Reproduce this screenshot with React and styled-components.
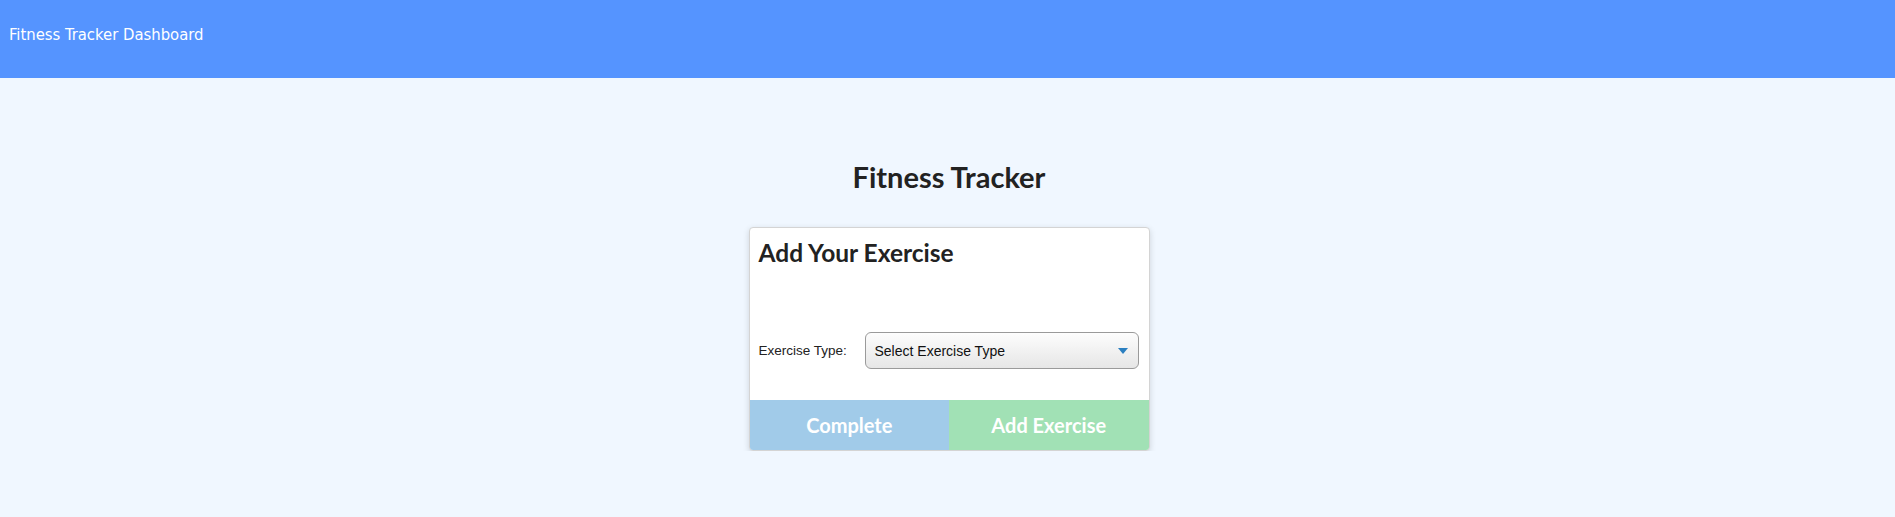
import React from "react";
import styled, { createGlobalStyle } from "styled-components";

const GlobalStyle = createGlobalStyle`
  html, body {
    margin: 0;
    padding: 0;
    background-color: #f0f7ff;
  }
  body {
    font-family: "Lato", "Liberation Sans", sans-serif;
    color: #222;
  }
`;

const TopBar = styled.header`
  height: 78px;
  background-color: #5594ff;
  display: flex;
  align-items: flex-start;
  padding: 25px 9px 0;
  box-sizing: border-box;
`;

const TopBarTitle = styled.span`
  font-family: "DejaVu Sans Condensed", "DejaVu Sans", Tahoma, sans-serif;
  font-stretch: condensed;
  font-size: 16.5px;
  color: white;
`;

const Main = styled.main`
  display: flex;
  flex-direction: column;
  align-items: center;
  padding: 81px 0 0 3px;
`;

const PageTitle = styled.h1`
  margin: 0 0 32px;
  font-family: "Lato", sans-serif;
  font-weight: 700;
  font-size: 29px;
  line-height: 36px;
  color: #222;
`;

const Card = styled.div`
  width: 401px;
  background-color: white;
  border: 1px solid #d4d4d4;
  border-radius: 4px;
  box-shadow: 0 2px 6px rgba(0, 0, 0, 0.15);
  overflow: hidden;
  box-sizing: border-box;
`;

const CardBody = styled.div`
  height: 172px;
  padding: 10px 9px 0;
  box-sizing: border-box;
  display: flex;
  flex-direction: column;
`;

const CardTitle = styled.h2`
  margin: 0;
  font-family: "Lato", sans-serif;
  font-weight: 700;
  font-size: 24.5px;
  line-height: 30px;
  color: #222;
`;

const FieldRow = styled.div`
  display: flex;
  align-items: center;
  margin-top: 64px;
`;

const Label = styled.label`
  width: 106px;
  font-family: "Liberation Sans", Arial, sans-serif;
  font-size: 13.5px;
  color: #222;
`;

const SelectBox = styled.div`
  position: relative;
  flex: 1;
  height: 37px;
  margin-right: 1px;
  border: 1px solid #9a9a9a;
  border-radius: 6px;
  background: linear-gradient(#fdfdfd, #e6e6e6);
  box-sizing: border-box;
  display: flex;
  align-items: center;
  padding: 0 10px 0 9px;
  font-family: "Liberation Sans", Arial, sans-serif;
  font-size: 14px;
  color: #111;
`;

const SelectText = styled.span`
  flex: 1;
`;

const Caret = styled.span`
  width: 0;
  height: 0;
  border-left: 5px solid transparent;
  border-right: 5px solid transparent;
  border-top: 6px solid #2b7fc0;
`;

const ButtonRow = styled.div`
  display: flex;
`;

const ActionButton = styled.button`
  flex: 1;
  height: 50px;
  border: none;
  background-color: ${(p) => p.$bg};
  color: white;
  font-family: "Lato", sans-serif;
  font-weight: 700;
  font-size: 20px;
  cursor: not-allowed;
`;

export default function App() {
  return (
    <>
      <GlobalStyle />
      <TopBar>
        <TopBarTitle>Fitness Tracker Dashboard</TopBarTitle>
      </TopBar>
      <Main>
        <PageTitle>Fitness Tracker</PageTitle>
        <Card>
          <CardBody>
            <CardTitle>Add Your Exercise</CardTitle>
            <FieldRow>
              <Label>Exercise Type:</Label>
              <SelectBox>
                <SelectText>Select Exercise Type</SelectText>
                <Caret />
              </SelectBox>
            </FieldRow>
          </CardBody>
          <ButtonRow>
            <ActionButton $bg="#a1cbe9">Complete</ActionButton>
            <ActionButton $bg="#a1e1b5">Add Exercise</ActionButton>
          </ButtonRow>
        </Card>
      </Main>
    </>
  );
}
